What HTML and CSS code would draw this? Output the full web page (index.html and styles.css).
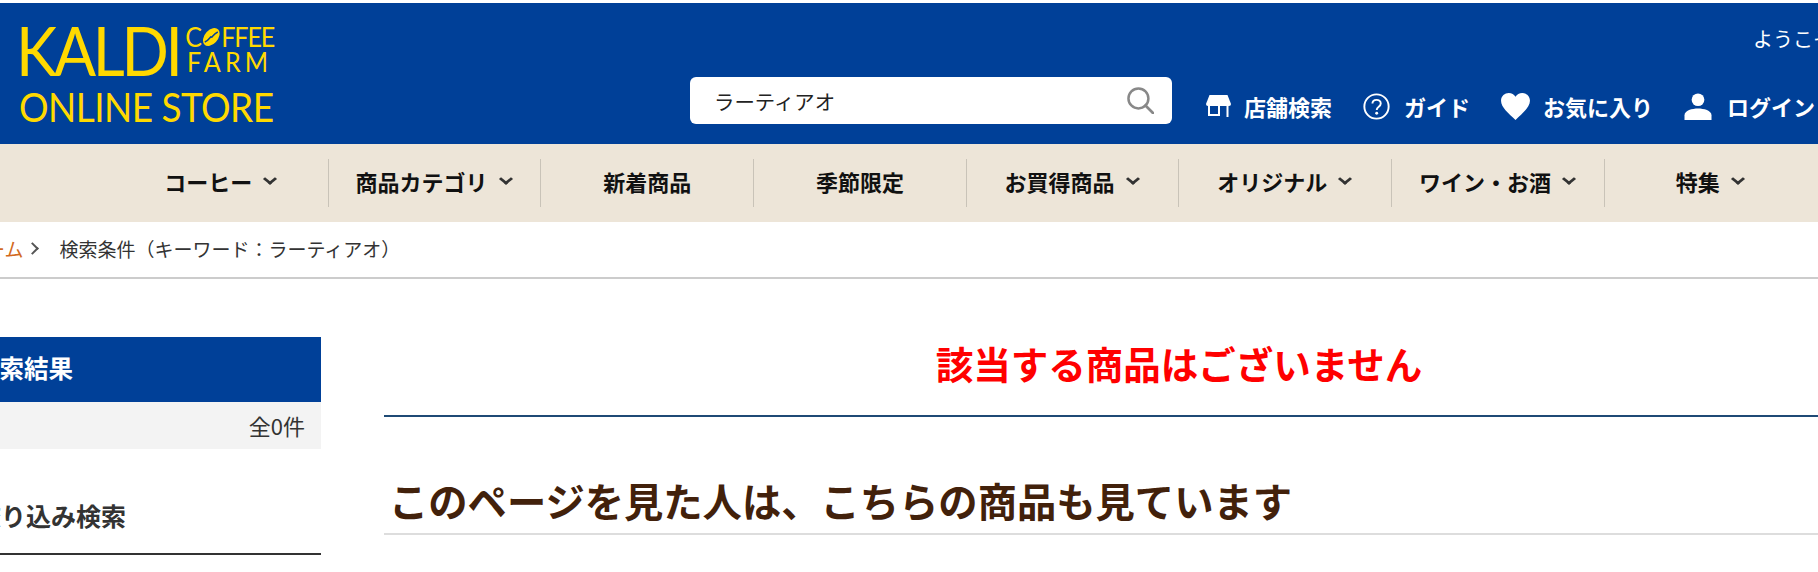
FILE: index.html
```html
<!DOCTYPE html>
<html lang="ja">
<head>
    <meta charset="utf-8">
    <title>検索結果 | KALDI ONLINE STORE</title>
    <link rel="stylesheet" href="styles.css">
</head>
<body>
    <header class="header">
        <a class="logo">
            <div class="logo-top">
                <span class="logo-kaldi">KALDI</span>
                <div class="logo-farm">
                    <span class="logo-coffee">C<svg class="bean" viewBox="0 0 20 20"><ellipse cx="10" cy="10" rx="10.5" ry="7" transform="rotate(-45 10 10)" fill="#ffd900"/><path d="M3 15 C8 13 9 9 10 10 C11 11 12 7 17 5" fill="none" stroke="#004098" stroke-width="1.6"/></svg>FFEE</span>
                    <span class="logo-farm-text">FARM</span>
                </div>
            </div>
            <div class="logo-store">ONLINE STORE</div>
        </a>
        <div class="search">
            <span class="search-text">ラーティアオ</span>
            <svg class="search-icon" viewBox="0 0 26 26"><circle cx="11" cy="11" r="9.6" fill="none" stroke="#888" stroke-width="2.4"/><path d="M17.8 17.8 L25 25" stroke="#888" stroke-width="2.6" stroke-linecap="round"/></svg>
        </div>
        <div class="header-right">
            <p class="welcome">ようこそ ゲスト 様</p>
            <nav class="user-links">
                <a class="user-link user-link-store">
                    <svg class="icon-store" viewBox="0 0 25 22"><path d="M3.5 0 H21.5 L25 9 Q25 11 23 11 H2 Q0 11 0 9 Z" fill="#fff"/><path d="M2 11 H4 V19 H12 V11 H14 V21 H2 Z M20.5 11 H22.5 V22 H20.5 Z" fill="#fff"/></svg>
                    店舗検索
                </a>
                <a class="user-link user-link-guide">
                    <svg class="icon-guide" viewBox="0 0 28 28"><circle cx="14" cy="14" r="12.6" fill="none" stroke="#fff" stroke-width="2"/><path d="M9.8 11 C9.8 5.8 18.4 5.8 18.4 11 C18.4 14.4 14.2 14.2 14.2 17.6" fill="none" stroke="#fff" stroke-width="2"/><circle cx="14.2" cy="21" r="1.5" fill="#fff"/></svg>
                    ガイド
                </a>
                <a class="user-link user-link-fav">
                    <svg class="icon-heart" viewBox="0 0 30 28"><path d="M15 28 C8 21 0 15 0 8 C0 3 4 0 8 0 C11 0 13.6 1.6 15 4 C16.4 1.6 19 0 22 0 C26 0 30 3 30 8 C30 15 22 21 15 28 Z" fill="#fff"/></svg>
                    お気に入り
                </a>
                <a class="user-link user-link-login">
                    <svg class="icon-person" viewBox="0 0 28 28"><circle cx="14" cy="7" r="6.6" fill="#fff"/><path d="M0 28 V23 C0 18 8 16 14 16 C20 16 28 18 28 23 V28 Z" fill="#fff"/></svg>
                    ログイン
                </a>
            </nav>
        </div>
    </header>

    <nav class="gnav">
        <a class="gnav-item">コーヒー<i class="chev"></i></a>
        <a class="gnav-item">商品カテゴリ<i class="chev"></i></a>
        <a class="gnav-item">新着商品</a>
        <a class="gnav-item">季節限定</a>
        <a class="gnav-item">お買得商品<i class="chev"></i></a>
        <a class="gnav-item">オリジナル<i class="chev"></i></a>
        <a class="gnav-item">ワイン・お酒<i class="chev"></i></a>
        <a class="gnav-item">特集<i class="chev"></i></a>
    </nav>

    <div class="breadcrumb">
        <a class="crumb-home">ホーム</a>
        <i class="crumb-arrow"></i>
        <span class="crumb-current">検索条件（キーワード：ラーティアオ）</span>
    </div>

    <div class="content">
        <aside class="side">
            <h2 class="side-title">検索結果</h2>
            <p class="side-count">全0件</p>
            <h3 class="side-sub">絞り込み検索</h3>
        </aside>
        <main class="main">
            <p class="no-result">該当する商品はございません</p>
            <h2 class="recommend">このページを見た人は、こちらの商品も見ています</h2>
        </main>
    </div>
</body>
</html>
```

FILE: styles.css
```css
html, body {
    height: 100%;
}

body {
    margin: 0;
    overflow: hidden;
    background-color: #fff;
    color: #333;
    font-family: "Noto Sans CJK JP", "Noto Sans", sans-serif;
}

p, h2, h3 {
    margin: 0;
}

/* header */
.header {
    display: flex;
    height: 141px;
    margin-top: 3px;
    background-color: #004098;
    white-space: nowrap;
}

.logo {
    width: 690px;
    flex-shrink: 0;
    padding: 16px 0 0 19px;
    box-sizing: border-box;
    color: #ffd900;
    font-family: "Lato", sans-serif;
}

.logo-top {
    display: flex;
    height: 62px;
    margin-left: -3px;
    transform: scaleX(0.93);
    transform-origin: left top;
}

.logo-kaldi {
    font-size: 67px;
    line-height: 62px;
    letter-spacing: -3.6px;
}

.logo-farm {
    display: flex;
    flex-direction: column;
    margin: 6px 0 0 6px;
}

.logo-coffee {
    display: flex;
    align-items: center;
    font-size: 27px;
    line-height: 24px;
    letter-spacing: -1.2px;
}

.bean {
    width: 20px;
    height: 20px;
    margin: 0 1px;
}

.logo-farm-text {
    padding-left: 2px;
    font-size: 27px;
    line-height: 25px;
    letter-spacing: 4.4px;
}

.logo-store {
    margin-top: 6px;
    font-size: 40px;
    line-height: 40px;
    letter-spacing: -0.6px;
    transform: scaleX(0.925);
    transform-origin: left top;
}

.search {
    display: flex;
    align-items: center;
    justify-content: space-between;
    width: 482px;
    height: 47px;
    margin-top: 74px;
    padding: 0 18px 0 24px;
    box-sizing: border-box;
    flex-shrink: 0;
    background-color: #fff;
    border-radius: 6px;
    color: #222;
    font-size: 20.4px;
}

.search-icon {
    width: 27px;
    height: 27px;
}

.header-right {
    flex-grow: 1;
    min-width: 0;
    overflow: hidden;
    padding-left: 34px;
}

.welcome {
    margin-top: 22px;
    padding-left: 547px;
    color: #fff;
    font-size: 20px;
    line-height: 28px;
}

.user-links {
    display: flex;
    margin-top: 35px;
}

.user-link {
    display: flex;
    align-items: center;
    height: 36px;
    color: #fff;
    font-size: 22px;
    font-weight: 700;
}

.user-link-store {
    gap: 13px;
    margin-right: 31px;
}

.user-link-guide {
    gap: 14px;
    margin-right: 31px;
}

.user-link-fav {
    gap: 13px;
    margin-right: 31px;
}

.user-link-login {
    gap: 15px;
}

.icon-store {
    width: 25px;
    height: 22px;
}

.icon-guide {
    width: 27px;
    height: 27px;
}

.icon-heart {
    width: 29px;
    height: 27px;
}

.icon-person {
    width: 28px;
    height: 27px;
}

/* global nav */
.gnav {
    display: grid;
    grid-template-columns: repeat(8, 212.7px);
    align-items: center;
    height: 78px;
    padding-left: 115px;
    background-color: #ede5d8;
}

.gnav-item {
    display: flex;
    align-items: center;
    justify-content: center;
    gap: 10px;
    height: 48px;
    padding-bottom: 4px;
    box-sizing: border-box;
    color: #111;
    font-size: 22px;
    font-weight: 700;
    white-space: nowrap;
    border-left: 1px solid #c9c3b8;
}

.gnav-item:first-child {
    border-left: none;
}

.chev {
    width: 7px;
    height: 7px;
    margin: -4px 3px 0 3px;
    border-right: 3px solid #333;
    border-bottom: 3px solid #333;
    transform: scaleY(0.8) rotate(45deg);
}

/* breadcrumb */
.breadcrumb {
    display: flex;
    align-items: center;
    height: 57px;
    margin-left: -33px;
    padding-bottom: 3px;
    box-sizing: border-box;
    border-bottom: 2px solid #ccc;
    font-size: 19px;
    white-space: nowrap;
}

.crumb-home {
    color: #d2691e;
}

.crumb-arrow {
    width: 7px;
    height: 7px;
    margin: 0 22px 0 5px;
    border-top: 2.5px solid #555;
    border-right: 2.5px solid #555;
    transform: rotate(45deg);
}

/* content */
.content {
    display: flex;
    gap: 63px;
    padding-top: 58px;
}

.side {
    flex-shrink: 0;
    width: 321px;
}

.side-title {
    height: 65px;
    margin-left: -25px;
    box-sizing: border-box;
    background-color: #004098;
    color: #fff;
    font-size: 24.5px;
    line-height: 62px;
    white-space: nowrap;
}

.side-count {
    height: 47px;
    padding-right: 16px;
    background-color: #f3f3f3;
    font-size: 22px;
    line-height: 47px;
    text-align: right;
}

.side-sub {
    margin: 46px 0 0 -24px;
    height: 58px;
    border-bottom: 2px solid #333;
    font-size: 25px;
    line-height: 40px;
    white-space: nowrap;
}

.main {
    flex-shrink: 0;
    width: 1590px;
}

.no-result {
    height: 78px;
    border-bottom: 2px solid #1f4a75;
    color: #f00;
    font-size: 37.5px;
    font-weight: 700;
    line-height: 52px;
    text-align: center;
}

.recommend {
    margin-top: 50px;
    padding: 0 0 0 5px;
    height: 66px;
    border-bottom: 2px solid #ddd;
    color: #42210b;
    font-size: 39.3px;
    font-weight: 700;
    line-height: 66px;
    white-space: nowrap;
}
```
